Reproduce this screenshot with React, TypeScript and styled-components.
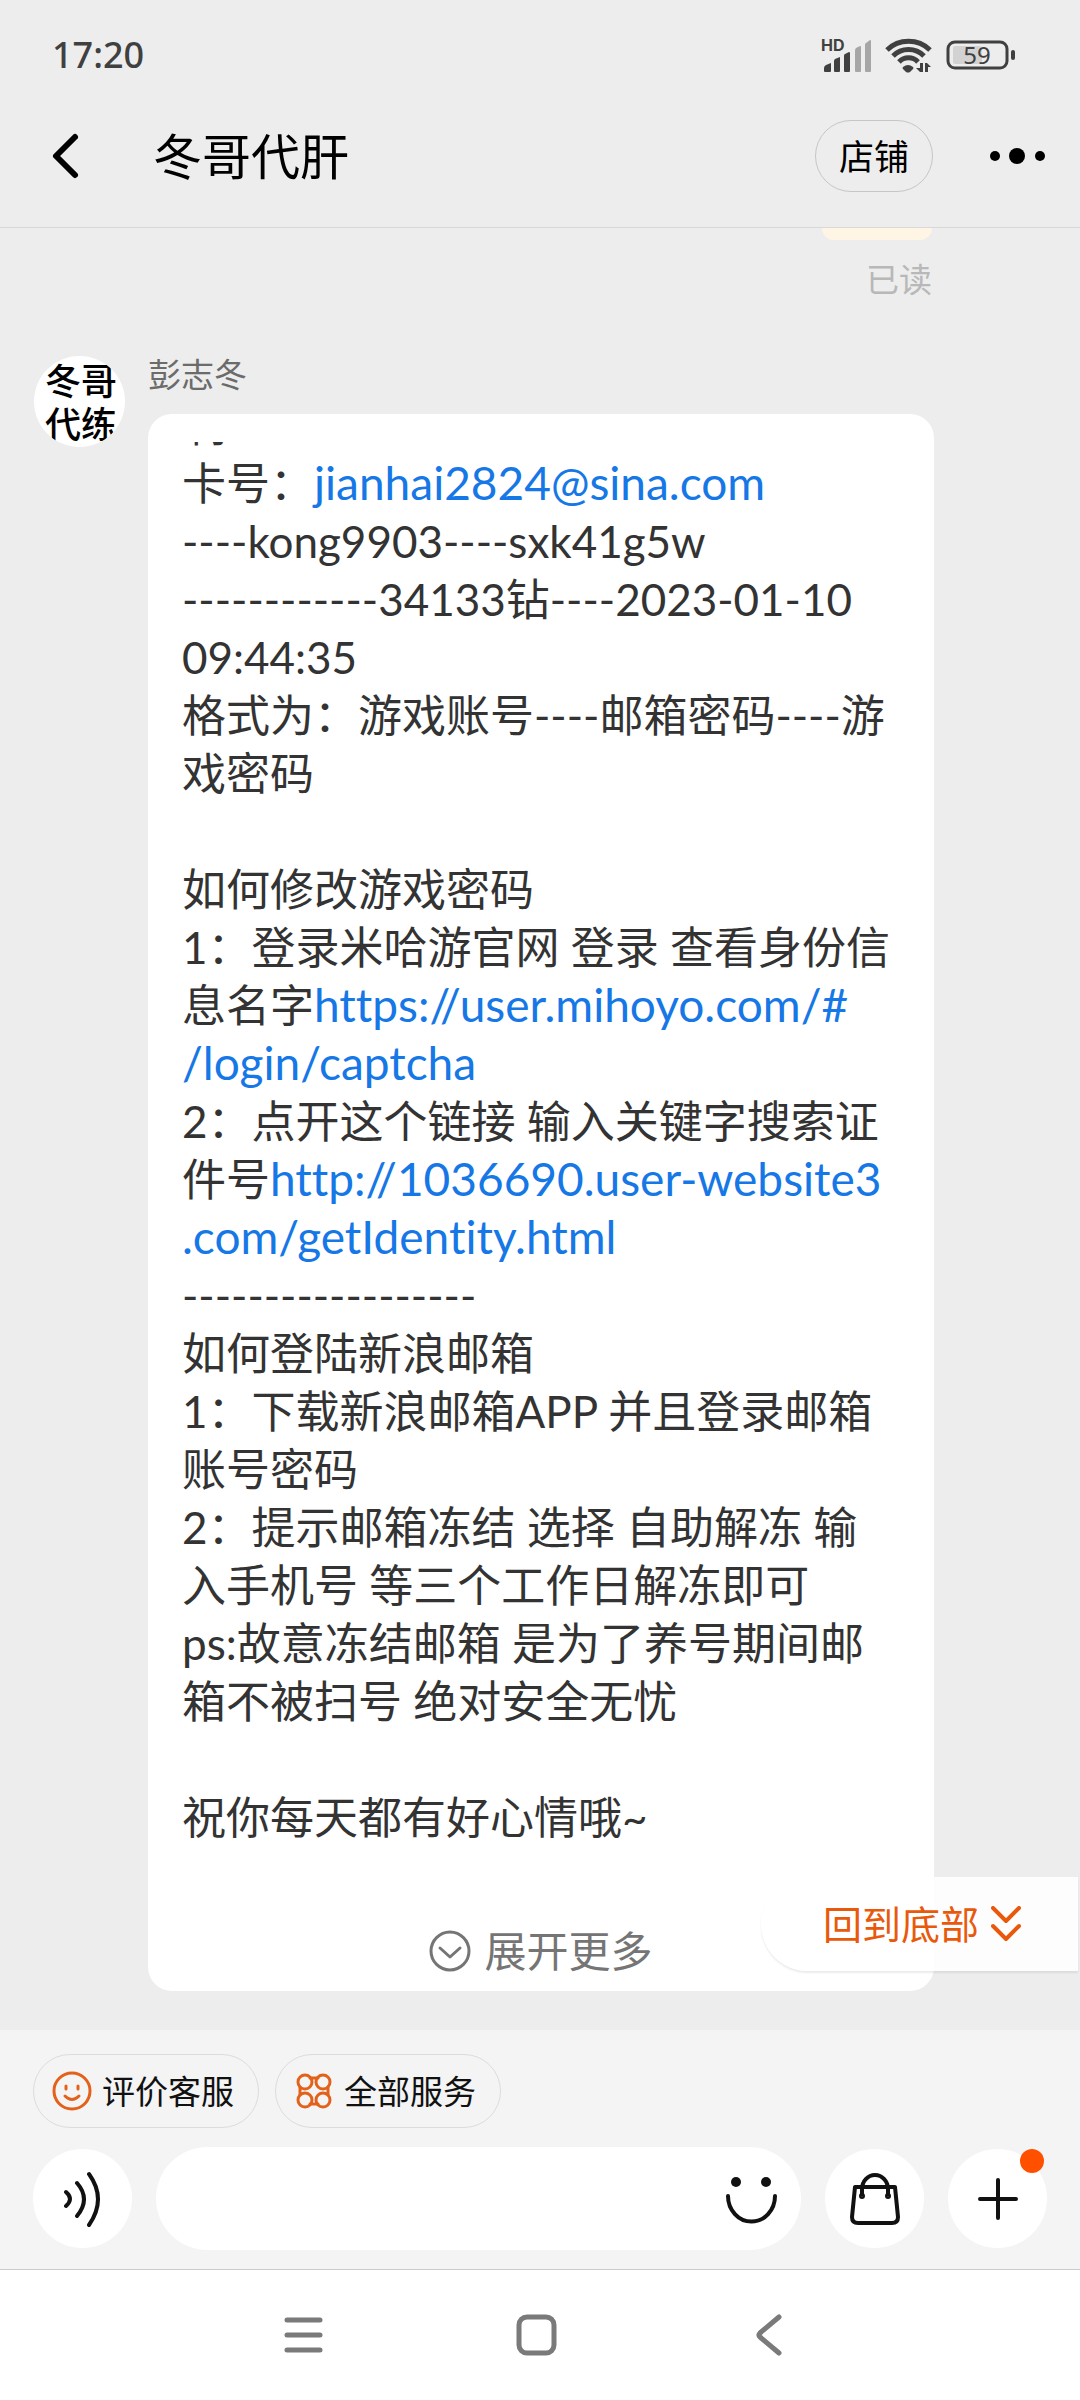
import React from "react";
import styled, { createGlobalStyle } from "styled-components";

const fontStack = `Lato, "Noto Sans CJK SC", sans-serif`;

const GlobalStyle = createGlobalStyle`
  * { box-sizing: border-box; }
  body {
    margin: 0;
    background: #fff;
    font-family: ${fontStack};
    font-variant-ligatures: none;
    color: #333;
  }
  button, input {
    margin: 0;
    padding: 0;
    border: 0;
    background: none;
    font-family: inherit;
    color: inherit;
    cursor: pointer;
  }
  svg { display: block; flex: none; }
`;

const Screen = styled.div`
  display: flex;
  flex-direction: column;
  min-height: 100vh;
  background: #ededed;
`;

const Header = styled.header`
  border-bottom: 1px solid #d8d8d8;
`;

const StatusBar = styled.div`
  display: flex;
  align-items: center;
  justify-content: space-between;
  height: 110px;
  padding: 0 64px 0 52px;
  color: #404040;
`;

const Clock = styled.time`
  font-family: "Noto Sans", sans-serif;
  font-size: 36px;
  font-weight: 500;
  line-height: 40px;
`;

const StatusIcons = styled.div`
  display: flex;
  align-items: center;
  gap: 12px;
`;

const TitleBar = styled.div`
  display: flex;
  align-items: center;
  height: 91px;
  margin-bottom: 26px;
  padding: 0 33px 0 48px;
  color: #000;
`;

const IconButton = styled.button`
  display: flex;
  align-items: center;
  justify-content: center;
`;

const Title = styled.h1`
  flex: 1;
  margin: 0 0 0 71px;
  font-size: 49px;
  font-weight: 400;
  line-height: 56px;
`;

const ShopButton = styled.button`
  height: 72px;
  margin-right: 55px;
  padding: 0 23px;
  border: 1px solid #c6c6c6;
  border-radius: 36px;
  font-size: 35px;
  line-height: 40px;
`;

const Chat = styled.main`
  position: relative;
  flex: 1;
  padding-bottom: 39px;
`;

const SentMessage = styled.div`
  display: flex;
  flex-direction: column;
  align-items: flex-end;
  padding-right: 148px;
`;

const SentBubble = styled.div`
  width: 110px;
  height: 12px;
  border-radius: 0 0 20px 20px;
  background: #fff5e5;
`;

const ReadMark = styled.span`
  margin-top: 21px;
  color: #b8b8b8;
  font-size: 33px;
  line-height: 36px;
`;

const ReceivedMessage = styled.article`
  display: flex;
  align-items: flex-start;
  gap: 23px;
  margin-top: 59px;
  padding: 0 146px 0 34px;
`;

const Avatar = styled.div`
  display: flex;
  flex: none;
  flex-direction: column;
  width: 91px;
  height: 91px;
  padding: 4px 0 0 11px;
  overflow: hidden;
  border-radius: 50%;
  background: #fff;
  color: #000;
  font-size: 36px;
  font-weight: 500;
  line-height: 43px;
  white-space: nowrap;
`;

const MessageBody = styled.div`
  flex: 1;
  min-width: 0;
`;

const Sender = styled.div`
  margin-bottom: 22px;
  color: #6b6b6b;
  font-size: 33px;
  line-height: 36px;
`;

const Bubble = styled.div`
  display: flex;
  flex-direction: column;
  padding: 28px 34px 19px;
  border-radius: 24px;
  background: #fff;
`;

const TextWindow = styled.div`
  overflow: hidden;
`;

const MessageText = styled.p`
  margin: -46px 0 0;
  font-size: 44px;
  line-height: 58px;
  white-space: pre-wrap;
`;

const Link = styled.a`
  color: #1677e6;
  font-size: 46px;
  line-height: 46px;
  text-decoration: none;
`;

const MoreButton = styled.button`
  display: flex;
  align-items: center;
  align-self: center;
  gap: 13px;
  margin: 84px 0 0;
  color: #757575;
  font-size: 42px;
  line-height: 42px;
`;

const BackToBottom = styled.button`
  position: absolute;
  right: 2px;
  bottom: 59px;
  display: flex;
  align-items: center;
  gap: 12px;
  height: 94px;
  padding: 0 57px 0 62px;
  border-radius: 47px 0 0 47px;
  background: rgba(255, 255, 255, 0.88);
  box-shadow: 0 2px 2px rgba(0, 0, 0, 0.08);
  color: #e8590c;
  font-size: 39px;
  line-height: 44px;
`;

const Composer = styled.footer`
  padding: 24px 33px 19px;
  border-bottom: 1px solid #cbcbcb;
  background: #f4f4f4;
  color: #111;
`;

const Shortcuts = styled.div`
  display: flex;
  gap: 16px;
  margin-bottom: 19px;
`;

const Shortcut = styled.button`
  display: flex;
  align-items: center;
  gap: 10px;
  height: 74px;
  padding: 0 24px 0 18px;
  border: 1px solid #dcdcdc;
  border-radius: 37px;
  font-size: 33px;
  line-height: 40px;
`;

const InputRow = styled.div`
  display: flex;
  align-items: center;
  gap: 24px;
`;

const RoundButton = styled.button`
  position: relative;
  display: flex;
  flex: none;
  align-items: center;
  justify-content: center;
  width: 99px;
  height: 99px;
  border-radius: 50%;
  background: #fff;
`;

const Badge = styled.span`
  position: absolute;
  top: 0;
  right: 3px;
  width: 24px;
  height: 24px;
  border-radius: 50%;
  background: #ff5000;
`;

const InputBox = styled.div`
  display: flex;
  flex: 1;
  align-items: center;
  height: 103px;
  padding: 0 23px 0 40px;
  border-radius: 52px;
  background: #fff;
`;

const TextField = styled.input`
  flex: 1;
  min-width: 0;
  height: 60px;
  outline: none;
  font-size: 42px;
`;

const SystemNav = styled.nav`
  display: flex;
  justify-content: center;
  height: 130px;
  padding-right: 8px;
  background: #fff;
`;

const NavButton = styled.button`
  display: flex;
  align-items: center;
  justify-content: center;
  width: 233px;
  height: 130px;
`;

const stroke = { fill: "none", stroke: "currentColor", strokeLinecap: "round", strokeLinejoin: "round" } as const;

const SignalIcon = () => (
  <svg width="54" height="44" viewBox="-2 -5 54 44" fill="#404040">
    <text x="0" y="13" fontSize="16" fontWeight="700" fontFamily="Inter, sans-serif">HD</text>
    <path d="M3 33v-3q0-2 2-3l5-2v8q0 1-1 1H4q-1 0-1-1z" />
    <path d="M13 33V23q0-1 1-2l5-2v14q0 1-1 1h-4q-1 0-1-1z" />
    <path d="M23 33V18q0-2 1-2l4-2q1 0 1 1v18q0 1-1 1h-4q-1 0-1-1z" />
    <path fill="#a6a6a6" d="M34 33V13q0-2 1-3l4-2q1 0 1 1v24q0 1-1 1h-4q-1 0-1-1z" />
    <path fill="#a6a6a6" d="M44 33V7q0-2 1-2l4-3q1 0 1 1v30q0 1-1 1h-4q-1 0-1-1z" />
  </svg>
);

const WifiIcon = () => (
  <svg width="49" height="36" viewBox="0 0 49 36">
    <g fill="none" stroke="#404040" strokeWidth="5">
      <path d="M2 13a31 31 0 0 1 43 0" />
      <path d="M8 19a22 22 0 0 1 31 0" />
      <path d="M14 25a13 13 0 0 1 19 0" />
    </g>
    <path fill="#404040" d="M18 30a8 8 0 0 1 10 0q1 1 0 2l-3 3q-2 1-4 0l-3-3q-1-1 0-2z" />
    <path fill="#404040" d="M35 26h3v9h-3l-4-4h4zM40 26h2l4 4h-3v5h-3z" />
  </svg>
);

const BatteryIcon = () => (
  <svg width="70" height="36" viewBox="0 -3 70 36">
    <rect x="7" y="6" width="29" height="18" rx="2" fill="#d2d2d2" />
    <rect x="2" y="2" width="59" height="26" rx="7" fill="none" stroke="#404040" strokeWidth="3" />
    <rect x="65" y="10" width="4" height="10" rx="2" fill="#404040" />
    <text x="31" y="24" textAnchor="middle" fontSize="24" fill="#404040" fontFamily="Noto Sans, sans-serif">59</text>
  </svg>
);

const BackIcon = () => (
  <svg width="34" height="50" viewBox="0 0 34 50" {...stroke} strokeWidth="6">
    <path d="M27 6 8 25l19 19" />
  </svg>
);

const DotsIcon = () => (
  <svg width="59" height="20" viewBox="0 0 59 20" fill="currentColor">
    <circle cx="7" cy="10" r="5" />
    <circle cx="29" cy="10" r="8" />
    <circle cx="52" cy="10" r="5" />
  </svg>
);

const CircleDownIcon = () => (
  <svg width="42" height="42" viewBox="0 0 42 42" {...stroke} strokeWidth="3">
    <circle cx="21" cy="21" r="19" />
    <path d="m11 18 10 9 10-9" />
  </svg>
);

const DoubleDownIcon = () => (
  <svg width="30" height="36" viewBox="0 0 30 36" {...stroke} strokeWidth="4">
    <path d="m2 2 13 13L28 2M2 20l13 13 13-13" />
  </svg>
);

const SmileIcon = () => (
  <svg width="40" height="40" viewBox="0 0 40 40" {...stroke} strokeWidth="3">
    <g stroke="#e3621b">
      <circle cx="20" cy="20" r="18" />
      <path d="M14 15v3M26 15v3M13 25q7 7 14 0" />
    </g>
  </svg>
);

const ServicesIcon = () => (
  <svg width="40" height="40" viewBox="0 0 40 40" {...stroke} strokeWidth="3">
    <g stroke="#e3621b">
      <circle cx="11" cy="11" r="7" />
      <circle cx="29" cy="11" r="7" />
      <circle cx="11" cy="29" r="7" />
      <circle cx="29" cy="29" r="7" />
      <path d="M16 7h8M16 33h8M6 16v8M34 16v8" />
    </g>
  </svg>
);

const VoiceIcon = () => (
  <svg width="56" height="56" viewBox="0 0 56 56" {...stroke} strokeWidth="4">
    <path d="M11 21q8 7 0 14M22 12q14 16 0 33M34 3q18 25 0 51" />
  </svg>
);

const EmojiIcon = () => (
  <svg width="54" height="54" viewBox="0 0 54 54">
    <circle cx="12" cy="10" r="5" fill="#111" />
    <circle cx="42" cy="10" r="5" fill="#111" />
    <path d="M4 24a23 25 0 0 0 47 0" {...stroke} stroke="#111" strokeWidth="4" />
  </svg>
);

const BagIcon = () => (
  <svg width="52" height="56" viewBox="0 0 52 56" {...stroke} strokeWidth="4">
    <path d="M6 16h40l3 30q0 6-6 6H9q-6 0-6-6z" />
    <path d="M13 24v-6a13 14 0 0 1 26 0v6" />
    <circle cx="13" cy="25" r="1" />
    <circle cx="39" cy="25" r="1" />
  </svg>
);

const PlusIcon = () => (
  <svg width="42" height="42" viewBox="0 0 42 42" {...stroke} strokeWidth="4">
    <path d="M21 2v38M3 21h36" />
  </svg>
);

const NavMenuIcon = () => (
  <svg width="40" height="42" viewBox="0 0 40 42" {...stroke} stroke="#7a7a7a" strokeWidth="5">
    <path d="M4 6h33M4 21h33M4 36h33" />
  </svg>
);

const NavHomeIcon = () => (
  <svg width="42" height="42" viewBox="0 0 42 42" {...stroke} stroke="#7a7a7a" strokeWidth="5">
    <rect x="4" y="3" width="35" height="36" rx="8" />
  </svg>
);

const NavBackIcon = () => (
  <svg width="42" height="42" viewBox="0 0 42 42" {...stroke} stroke="#7a7a7a" strokeWidth="5">
    <path d="M31 3 12 19q-2 2 0 4l19 16" />
  </svg>
);

export default function App() {
  return (
    <>
      <GlobalStyle />
      <Screen>
        <Header>
          <StatusBar>
            <Clock>17:20</Clock>
            <StatusIcons>
              <SignalIcon />
              <WifiIcon />
              <BatteryIcon />
            </StatusIcons>
          </StatusBar>
          <TitleBar>
            <IconButton type="button" aria-label="返回">
              <BackIcon />
            </IconButton>
            <Title>冬哥代肝</Title>
            <ShopButton type="button">店铺</ShopButton>
            <IconButton type="button" aria-label="更多">
              <DotsIcon />
            </IconButton>
          </TitleBar>
        </Header>

        <Chat>
          <SentMessage>
            <SentBubble />
            <ReadMark>已读</ReadMark>
          </SentMessage>

          <ReceivedMessage>
            <Avatar>
              <span>冬哥</span>
              <span>代练</span>
            </Avatar>
            <MessageBody>
              <Sender>彭志冬</Sender>
              <Bubble>
                <TextWindow>
                  <MessageText>
                    {"制\n卡号："}
                    <Link href="mailto:jianhai2824@sina.com">jianhai2824@sina.com</Link>
                    {"\n----kong9903----sxk41g5w\n------------34133钻----2023-01-10\n09:44:35\n"}
                    {"格式为：游戏账号----邮箱密码----游\n戏密码\n\n如何修改游戏密码\n"}
                    {"1：登录米哈游官网 登录 查看身份信\n息名字"}
                    <Link href="https://user.mihoyo.com/#/login/captcha">
                      {"https://user.mihoyo.com/#\n/login/captcha"}
                    </Link>
                    {"\n2：点开这个链接 输入关键字搜索证\n件号"}
                    <Link href="http://1036690.user-website3.com/getIdentity.html">
                      {"http://1036690.user-website3\n.com/getIdentity.html"}
                    </Link>
                    {"\n------------------\n如何登陆新浪邮箱\n"}
                    {"1：下载新浪邮箱APP 并且登录邮箱\n账号密码\n"}
                    {"2：提示邮箱冻结 选择 自助解冻 输\n入手机号 等三个工作日解冻即可\n"}
                    {"ps:故意冻结邮箱 是为了养号期间邮\n箱不被扫号 绝对安全无忧\n\n"}
                    {"祝你每天都有好心情哦~"}
                  </MessageText>
                </TextWindow>
                <MoreButton type="button">
                  <CircleDownIcon />
                  展开更多
                </MoreButton>
              </Bubble>
            </MessageBody>
          </ReceivedMessage>

          <BackToBottom type="button">
            回到底部
            <DoubleDownIcon />
          </BackToBottom>
        </Chat>

        <Composer>
          <Shortcuts>
            <Shortcut type="button">
              <SmileIcon />
              评价客服
            </Shortcut>
            <Shortcut type="button">
              <ServicesIcon />
              全部服务
            </Shortcut>
          </Shortcuts>
          <InputRow>
            <RoundButton type="button" aria-label="语音">
              <VoiceIcon />
            </RoundButton>
            <InputBox>
              <TextField type="text" aria-label="输入消息" />
              <IconButton type="button" aria-label="表情">
                <EmojiIcon />
              </IconButton>
            </InputBox>
            <RoundButton type="button" aria-label="商品">
              <BagIcon />
            </RoundButton>
            <RoundButton type="button" aria-label="添加">
              <PlusIcon />
              <Badge />
            </RoundButton>
          </InputRow>
        </Composer>

        <SystemNav>
          <NavButton type="button" aria-label="最近任务">
            <NavMenuIcon />
          </NavButton>
          <NavButton type="button" aria-label="主页">
            <NavHomeIcon />
          </NavButton>
          <NavButton type="button" aria-label="后退">
            <NavBackIcon />
          </NavButton>
        </SystemNav>
      </Screen>
    </>
  );
}
